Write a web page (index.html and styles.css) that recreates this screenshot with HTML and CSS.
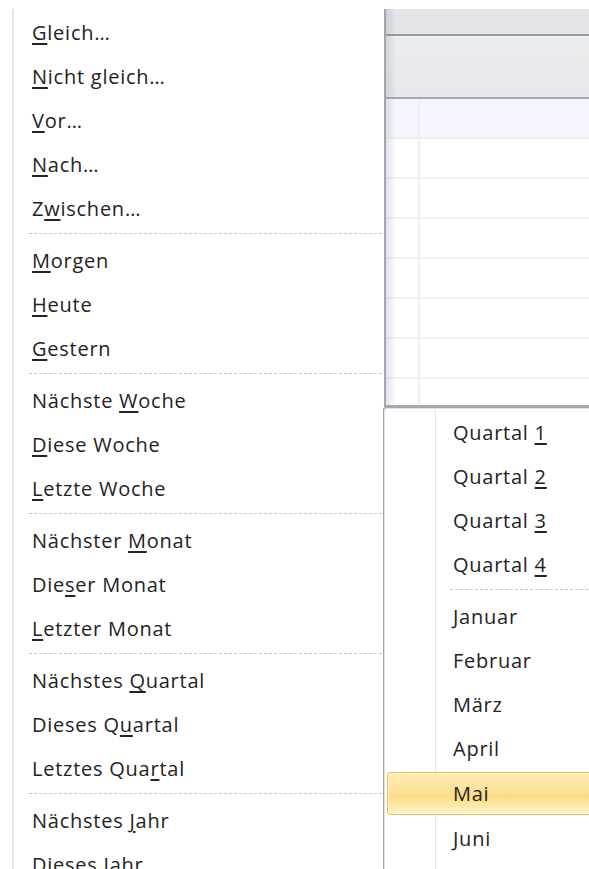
FILE: index.html
```html
<!DOCTYPE html>
<html lang="de">
<head>
<meta charset="utf-8">
<title>Datumsfilter</title>
<link rel="stylesheet" href="styles.css">
</head>
<body>
<div class="screen">
  <div class="menu">
    <div class="item"><u>G</u>leich…</div>
    <div class="item"><u>N</u>icht gleich…</div>
    <div class="item"><u>V</u>or…</div>
    <div class="item"><u>N</u>ach…</div>
    <div class="item">Z<u>w</u>ischen…</div>
    <div class="sep"></div>
    <div class="item"><u>M</u>orgen</div>
    <div class="item"><u>H</u>eute</div>
    <div class="item"><u>G</u>estern</div>
    <div class="sep"></div>
    <div class="item">Nächste <u>W</u>oche</div>
    <div class="item"><u>D</u>iese Woche</div>
    <div class="item"><u>L</u>etzte Woche</div>
    <div class="sep"></div>
    <div class="item">Nächster <u>M</u>onat</div>
    <div class="item">Die<u>s</u>er Monat</div>
    <div class="item"><u>L</u>etzter Monat</div>
    <div class="sep"></div>
    <div class="item">Nächstes <u>Q</u>uartal</div>
    <div class="item">Dieses Q<u>u</u>artal</div>
    <div class="item">Letztes Qua<u>r</u>tal</div>
    <div class="sep"></div>
    <div class="item">Nächstes <u>J</u>ahr</div>
    <div class="item">Dieses Jahr</div>
  </div>

  <div class="grid">
    <div class="grid-bar"></div>
    <div class="grid-head"></div>
    <div class="grid-body">
      <div class="row row-first"><div class="cell-a"></div><div class="cell-b"></div></div>
      <div class="row"><div class="cell-a"></div><div class="cell-b"></div></div>
      <div class="row"><div class="cell-a"></div><div class="cell-b"></div></div>
      <div class="row"><div class="cell-a"></div><div class="cell-b"></div></div>
      <div class="row"><div class="cell-a"></div><div class="cell-b"></div></div>
      <div class="row"><div class="cell-a"></div><div class="cell-b"></div></div>
      <div class="row"><div class="cell-a"></div><div class="cell-b"></div></div>
      <div class="row row-last"><div class="cell-a"></div><div class="cell-b"></div></div>
    </div>
  </div>

  <div class="submenu">
    <div class="item">Quartal <u>1</u></div>
    <div class="item">Quartal <u>2</u></div>
    <div class="item">Quartal <u>3</u></div>
    <div class="item">Quartal <u>4</u></div>
    <div class="sep"></div>
    <div class="item">Januar</div>
    <div class="item">Februar</div>
    <div class="item">März</div>
    <div class="item">April</div>
    <div class="item hot">Mai</div>
    <div class="item">Juni</div>
  </div>
</div>
</body>
</html>
```

FILE: styles.css
```css
html, body {
  margin: 0;
  padding: 0;
  background: #ffffff;
}

.screen {
  position: relative;
  width: 589px;
  height: 869px;
  overflow: hidden;
  display: flex;
  align-items: flex-start;
  font-family: "Open Sans", "Noto Sans", sans-serif;
  font-size: 20px;
  letter-spacing: 0.75px;
  color: #232323;
}

/* main date-filter menu */
.menu {
  width: 370px;
  margin-left: 12px;
  margin-top: 9px;
  padding-top: 2px;
  border-left: 2px solid #e4e6eb;
  flex: none;
  height: 900px;
}

.item {
  height: 44px;
  line-height: 44px;
  padding-left: 18px;
  white-space: nowrap;
}

.item u {
  text-decoration: underline;
  text-decoration-thickness: 1.5px;
  text-underline-offset: 3px;
}

.sep {
  height: 8px;
  box-sizing: border-box;
  padding-top: 2px;
  margin-left: 15px;
}

.sep::before {
  content: "";
  display: block;
  height: 1px;
  background: repeating-linear-gradient(to right, #c6c6c6 0 3px, transparent 3px 5px);
}

/* data grid behind the menus */
.grid {
  flex: 1;
  margin-top: 9px;
  height: 398px;
  border-left: 2px solid #a4a8ae;
  position: relative;
  display: flex;
  flex-direction: column;
}

.grid::after {
  content: "";
  position: absolute;
  top: 0;
  bottom: 0;
  left: 0;
  width: 10px;
  background: linear-gradient(to right, rgba(150, 155, 175, 0.28), rgba(150, 155, 175, 0));
  pointer-events: none;
}

.grid-bar {
  height: 25px;
  background: #e3e5e9;
  border-bottom: 2px solid #959ba2;
}

.grid-head {
  height: 60px;
  border-top: 1px solid #f4f5f6;
  background: linear-gradient(#ebecee, #e6e8eb);
  border-bottom: 2px solid #a3a8ad;
}

.grid-body {
  flex: 1;
  display: flex;
  flex-direction: column;
  border-bottom: 2px solid #a9acb1;
  overflow: hidden;
}

.row {
  flex: none;
  height: 40px;
  box-sizing: border-box;
  border-bottom: 2px solid #f0f1f7;
  display: flex;
}

.row-first {
  background: #f5f6fd;
}

.row-last {
  border-bottom: none;
}

.cell-a {
  width: 32px;
  border-right: 2px solid #eff0f5;
}

.cell-b {
  flex: 1;
}

/* quarter / month submenu popped over the grid */
.submenu {
  position: absolute;
  left: 383px;
  top: 407px;
  width: 260px;
  height: 480px;
  box-sizing: border-box;
  padding-top: 3px;
  background:
    linear-gradient(#e3e4e7, #e3e4e7) 51px 2px / 1px 100% no-repeat,
    #ffffff;
  border-left: 1px solid #a2a6ab;
  border-top: 1px solid #a2a6ab;
  border-top-left-radius: 3px;
  box-shadow: inset 1px 1px 0 #dfe1e4;
}

.submenu .item {
  padding-left: 66px;
  margin-left: 3px;
}

.submenu .sep {
  margin-left: 66px;
}

.submenu .item.hot {
  height: 41px;
  line-height: 41px;
  margin-top: 1px;
  margin-bottom: 2px;
  margin-left: 3px;
  padding-left: 65px;
  border: 1px solid #e3c05f;
  border-radius: 3px;
  background: linear-gradient(#fdeeb8 0%, #fce3a0 35%, #fbdb84 55%, #fde9a8 80%, #fef5d4 100%);
  box-shadow: inset 0 0 0 1px rgba(255, 250, 230, 0.7);
}
```
